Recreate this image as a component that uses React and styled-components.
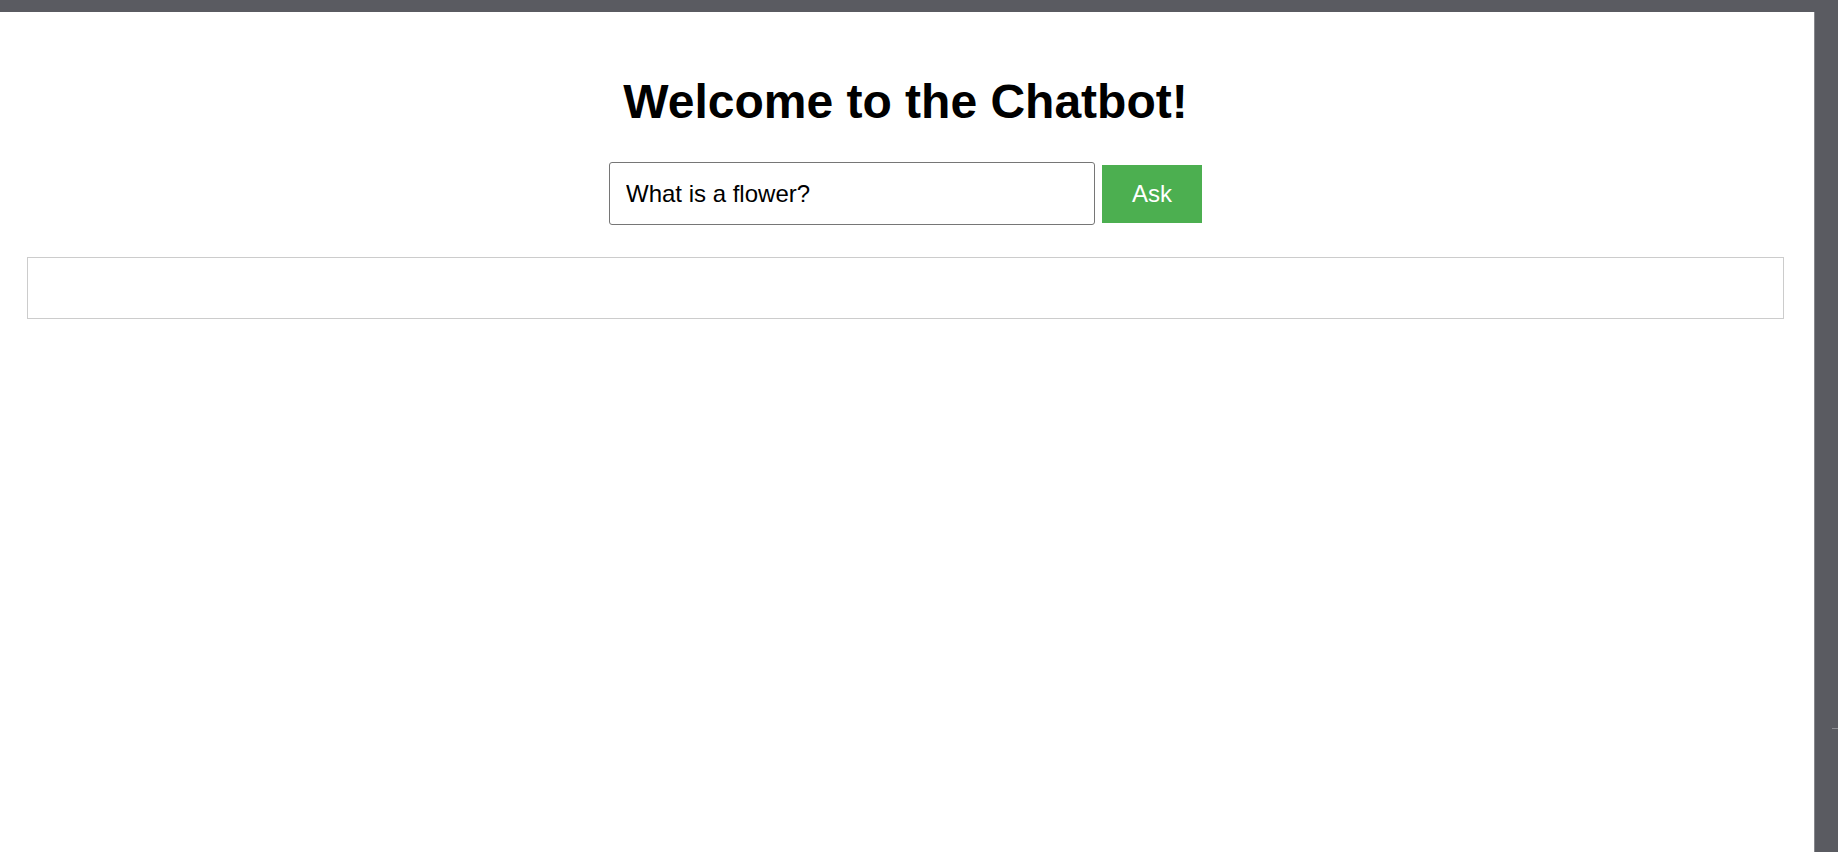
import React, { useState } from 'react';
import styled, { createGlobalStyle } from 'styled-components';

const GlobalStyle = createGlobalStyle`
	html, body {
		margin: 0;
		padding: 0;
		background: #ffffff;
	}
	body {
		font-family: 'Liberation Sans', Arial, sans-serif;
		color: #000;
	}
`;

const Frame = styled.div`
	display: grid;
	grid-template-rows: 12px 1fr;
	grid-template-columns: 1fr 24px;
	height: 100vh;
	overflow: hidden;
`;

const TopBar = styled.div`
	grid-column: 1 / 3;
	background: #5a5b61;
`;

const SidePanel = styled.div`
	position: relative;
	background: #5a5b61;
	border-left: 1px solid #86878c;

	&::after {
		content: '';
		position: absolute;
		right: 0;
		top: 716px;
		width: 6px;
		height: 1px;
		background: #8d8e93;
	}
`;

const Main = styled.main`
	padding: 30px 30px 0 27px;
	background: #fff;
`;

const Title = styled.h1`
	margin: 32px 0 33px;
	font-size: 48px;
	font-weight: bold;
	line-height: 55px;
	text-align: center;
`;

const AskForm = styled.form`
	display: flex;
	justify-content: center;
	align-items: center;
	gap: 7px;
`;

const QuestionInput = styled.input`
	box-sizing: border-box;
	width: 486px;
	height: 63px;
	padding: 0 16px;
	border: 1px solid #767676;
	border-radius: 3px;
	font-family: inherit;
	font-size: 24px;
	color: #000;
	outline: none;
`;

const AskButton = styled.button`
	box-sizing: border-box;
	width: 100px;
	height: 58px;
	padding: 15px 30px;
	border: none;
	background: #4caf50;
	color: #fff;
	font-family: inherit;
	font-size: 24px;
	cursor: pointer;
`;

const ResponseBox = styled.div`
	box-sizing: border-box;
	margin-top: 32px;
	min-height: 62px;
	padding: 30px;
	border: 1px solid #cccccc;
	font-size: 24px;
`;

export default function App() {
	const [question, setQuestion] = useState('What is a flower?');
	const [answer, setAnswer] = useState('');

	const handleSubmit = e => {
		e.preventDefault();
		// no backend here, keep the box empty
		setAnswer('');
	};

	return (
		<>
			<GlobalStyle />
			<Frame>
				<TopBar />
				<Main>
					<Title>Welcome to the Chatbot!</Title>
					<AskForm onSubmit={handleSubmit}>
						<QuestionInput
							type='text'
							value={question}
							onChange={e => setQuestion(e.target.value)}
						/>
						<AskButton type='submit'>Ask</AskButton>
					</AskForm>
					<ResponseBox>{answer}</ResponseBox>
				</Main>
				<SidePanel />
			</Frame>
		</>
	);
}
